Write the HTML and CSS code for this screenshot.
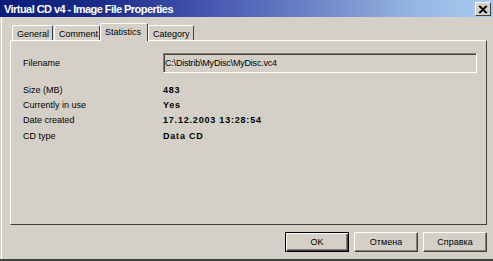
FILE: index.html
```html
<!DOCTYPE html>
<html>
<head>
<meta charset="utf-8">
<link rel="stylesheet" href="styles.css">
</head>
<body>
<div class="window">
  <div class="titlebar">
    <span class="title">Virtual CD v4 - Image File Properties</span>
    <span class="close"><svg width="10" height="9" viewBox="0 0 10 9"><path d="M1 1L8 8M2 1L9 8M8 1L1 8M9 1L2 8" stroke="#000" stroke-width="1.2"/></svg></span>
  </div>
  <div class="content">
    <div class="tabs">
      <div class="tab first">General</div>
      <div class="tab">Comment</div>
      <div class="tab active">Statistics</div>
      <div class="tab">Category</div>
    </div>
    <div class="panel">
      <div class="row file">
        <span class="label">Filename</span>
        <span class="field">C:\Distrib\MyDisc\MyDisc.vc4</span>
      </div>
      <div class="stats">
        <div class="row"><span class="label">Size (MB)</span><span class="value">483</span></div>
        <div class="row"><span class="label">Currently in use</span><span class="value">Yes</span></div>
        <div class="row"><span class="label">Date created</span><span class="value">17.12.2003 13:28:54</span></div>
        <div class="row"><span class="label">CD type</span><span class="value">Data CD</span></div>
      </div>
    </div>
    <div class="buttons">
      <button class="btn default">OK</button>
      <button class="btn">Отмена</button>
      <button class="btn">Справка</button>
    </div>
  </div>
</div>
</body>
</html>
```
FILE: styles.css
```css
html, body {
  margin: 0;
  padding: 0;
  background: #d4d0c8;
}
.window {
  width: 493px;
  height: 261px;
  box-sizing: border-box;
  border-bottom: 2px solid #404040;
  font-family: "Liberation Sans", Arial, sans-serif;
  overflow: hidden;
}
.titlebar {
  height: 17px;
  background: linear-gradient(to right, #0a1c78 0%, #1a2c88 20%, #4a5cb4 45%, #7088c8 65%, #98b8e4 85%, #a8caf0 100%);
  display: flex;
  align-items: center;
  justify-content: space-between;
  padding-left: 4px;
  padding-right: 2px;
}
.title {
  color: #fff;
  font-weight: bold;
  font-size: 11px;
  letter-spacing: -0.55px;
}
.close {
  width: 14px;
  height: 12px;
  background: #d4d0c8;
  border: 1px solid;
  border-color: #fff #404040 #404040 #fff;
  display: flex;
  align-items: center;
  justify-content: center;
  margin-top: 1px;
}
.content {
  border-left: 1px solid #fff;
  margin-left: 1px;
  height: 242px;
  padding: 5px 6px 0 8px;
  box-sizing: border-box;
}
.tabs {
  display: flex;
  align-items: flex-end;
  height: 18px;
  padding-left: 2px;
  font-size: 9px;
}
.tab {
  height: 15px;
  box-sizing: border-box;
  border: 1px solid;
  border-color: #fff #404040 transparent #fff;
  border-bottom: none;
  padding: 3px 4px 0;
  margin-right: 1px;
  color: #000;
  border-radius: 2px 2px 0 0;
}
.tab:nth-child(1) { width: 41px; }
.tab:nth-child(2) { width: 46px; }
.tab:nth-child(4) { width: 46px; }
.tab.active {
  height: 18px;
  width: 48px;
  padding-top: 3px;
  margin: 0 0 -1px -1px;
  background: #d4d0c8;
  position: relative;
  z-index: 1;
}
.panel {
  height: 185px;
  box-sizing: border-box;
  border: 1px solid;
  border-color: #fff #404040 #404040 #fff;
  padding: 12px 9px 0 12px;
  font-size: 9px;
}
.row {
  display: flex;
  align-items: center;
}
.label {
  width: 140px;
  flex: none;
}
.file {
  height: 20px;
}
.field {
  flex: 1;
  height: 20px;
  box-sizing: border-box;
  border: 1px solid;
  border-color: #808080 #fff #fff #808080;
  box-shadow: inset 1px 1px 0 #404040;
  padding: 2px 1px;
  display: flex;
  align-items: center;
  letter-spacing: -0.2px;
}
.stats {
  margin-top: 9px;
  display: flex;
  flex-direction: column;
}
.stats .row {
  height: 15px;
}
.stats .row:nth-child(3) { height: 16px; }
.value {
  font-weight: bold;
  font-size: 9px;
  letter-spacing: 0.8px;
}
.buttons {
  display: flex;
  justify-content: flex-end;
  gap: 5px;
  margin-top: 7px;
}
.btn {
  width: 64px;
  height: 20px;
  background: #d4d0c8;
  border: 1px solid;
  border-color: #fff #404040 #404040 #fff;
  box-shadow: inset -1px -1px 0 #808080;
  font-family: "Liberation Sans", Arial, sans-serif;
  font-size: 9px;
  color: #000;
  padding: 0;
}
.btn.default {
  border: 1px solid #000;
  box-shadow: inset 1px 1px 0 #fff, inset -1px -1px 0 #404040, inset -2px -2px 0 #808080;
}
```
